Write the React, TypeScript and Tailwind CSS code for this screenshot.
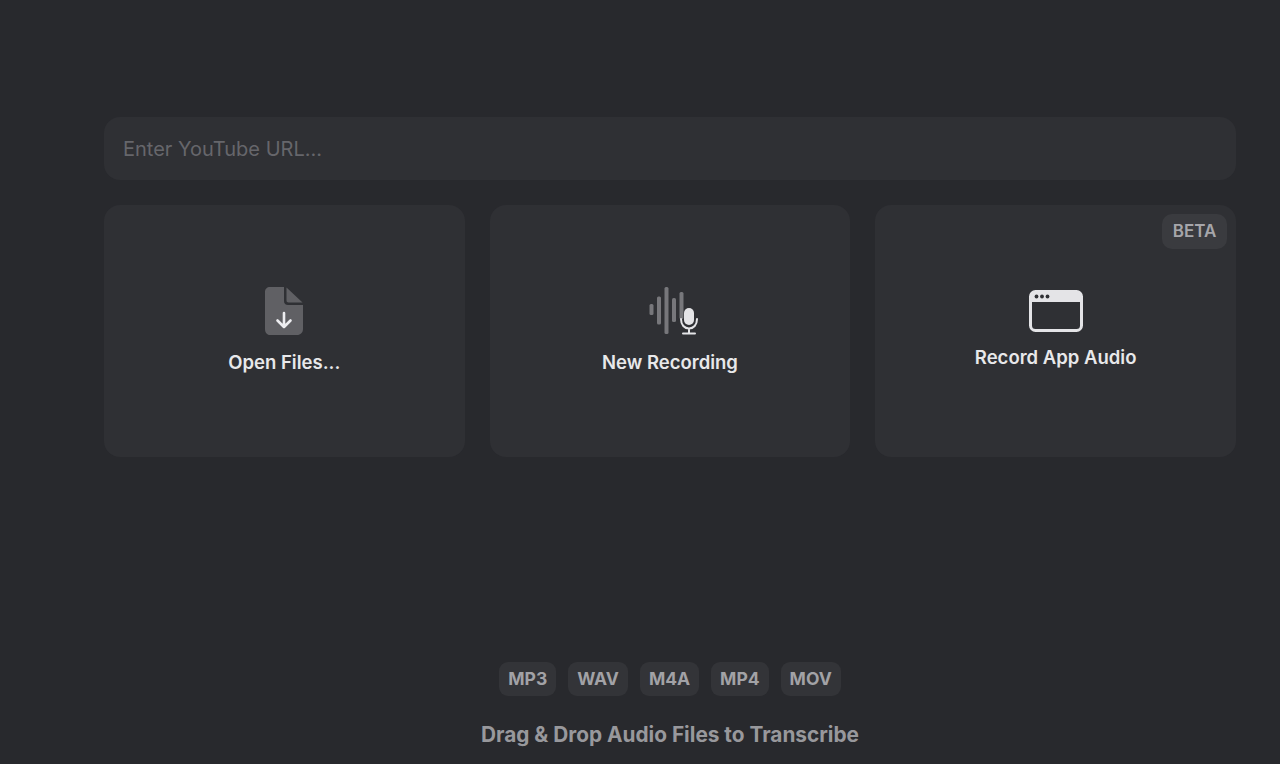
import type { ReactNode } from 'react';

const FORMATS = ['MP3', 'WAV', 'M4A', 'MP4', 'MOV'];

function FileIcon() {
  return (
    <svg width="38" height="48" viewBox="0 0 38 48" fill="none">
      <path d="M5 0H19V14C19 16.5 20.5 18 23 18H38V42C38 45.5 35.500 48 32 48H5C2 48 0 45.500 0 42V5C0 2 2 0 5 0Z" fill="#606064" />
      <path d="M21.500 0.500L37.500 15.500H23.500C22.300 15.500 21.500 14.700 21.500 13.500V0.500Z" fill="#606064" />
      <path d="M19 26V40M12.500 33.500L19 40L25.500 33.500" stroke="#ededf0" strokeWidth="2.600" strokeLinecap="round" strokeLinejoin="round" />
    </svg>
  );
}

function RecordingIcon() {
  return (
    <svg className="ml-[8px]" width="50" height="48" viewBox="0 0 50 48" fill="none">
      <rect x="0.500" y="17" width="4" height="11" rx="1.500" fill="#77777b" />
      <rect x="8" y="9.500" width="4" height="28" rx="1.500" fill="#77777b" />
      <rect x="15.500" y="0" width="4" height="47" rx="1.500" fill="#77777b" />
      <rect x="23" y="11" width="4" height="24" rx="1.500" fill="#77777b" />
      <rect x="30.500" y="5" width="4" height="27" rx="1.500" fill="#77777b" />
      <rect x="35" y="21" width="10" height="17" rx="5" fill="#e4e4e7" />
      <path d="M32 32C32 38 35.500 41.500 40 41.500C44.500 41.500 48 38 48 32M40 41.500V46M34 46.500H46" stroke="#e4e4e7" strokeWidth="2" strokeLinecap="round" />
    </svg>
  );
}

function WindowIcon() {
  return (
    <svg width="54" height="42" viewBox="0 0 54 42" fill="none">
      <rect x="1.500" y="1.500" width="51" height="39" rx="5" stroke="#e4e4e7" strokeWidth="3" />
      <path d="M6 1H48C51 1 53 3 53 6V12H1V6C1 3 3 1 6 1Z" fill="#e4e4e7" />
      <circle cx="7.500" cy="6.500" r="1.900" fill="#2f3034" />
      <circle cx="13" cy="6.500" r="1.900" fill="#2f3034" />
      <circle cx="18.500" cy="6.500" r="1.900" fill="#2f3034" />
    </svg>
  );
}

function ActionCard({ icon, label, badge, spacing }: { icon: ReactNode; label: string; badge?: string; spacing: string }) {
  return (
    <button type="button" className={`relative flex h-[252px] flex-col items-center justify-center rounded-[16px] bg-[#2f3034] ${spacing}`}>
      {badge && (
        <span className="absolute right-[9px] top-[9px] flex h-[35px] w-[65px] items-center justify-center rounded-[10px] bg-[#3a3b3f] pt-[1px] text-[17px] font-semibold text-[#a6a6aa]">
          {badge}
        </span>
      )}
      {icon}
      <span className="text-[18.500px] font-semibold leading-[24px] text-[#e8e8ea]">{label}</span>
    </button>
  );
}

export default function App() {
  return (
    <div className="flex h-[764px] w-[1280px] flex-col overflow-hidden bg-[#28292d] pl-[104px] pr-[44px] pt-[117px] font-['Inter',sans-serif]">
      <div className="flex h-[63px] items-center rounded-[16px] bg-[#2f3034] px-[19px] pt-[1px]">
        <span className="text-[20px] text-[#66666b]">Enter YouTube URL...</span>
      </div>

      <div className="mt-[25px] grid grid-cols-3 gap-[25px]">
        <ActionCard icon={<FileIcon />} label="Open Files..." spacing="gap-[15px] pb-[2px]" />
        <ActionCard icon={<RecordingIcon />} label="New Recording" spacing="gap-[15px] pb-[2px]" />
        <ActionCard icon={<WindowIcon />} label="Record App Audio" badge="BETA" spacing="gap-[13px] pb-[4px]" />
      </div>

      <div className="mt-[205px] flex justify-center gap-[12px]">
        {FORMATS.map((format) => (
          <span key={format} className="flex h-[34px] items-center rounded-[9px] bg-[#333438] px-[9px] pt-[1px] text-[17.500px] font-bold text-[#a2a2a6]">
            {format}
          </span>
        ))}
      </div>

      <p className="mt-[26px] text-center text-[20.800px] font-bold leading-[26px] text-[#98989c]">
        Drag &amp; Drop Audio Files to Transcribe
      </p>
    </div>
  );
}
